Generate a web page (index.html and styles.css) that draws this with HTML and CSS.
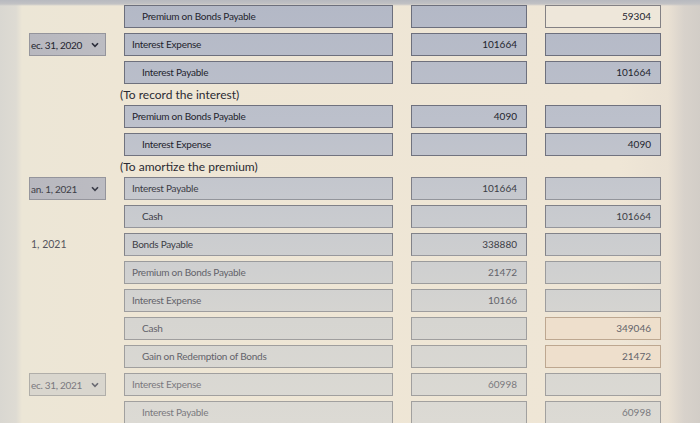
FILE: index.html
```html
<!DOCTYPE html>
<html lang="en">
<head>
<meta charset="utf-8">
<title>Journal entries</title>
<link rel="stylesheet" href="styles.css">
</head>
<body>
<div class="sheet">
  <div class="row tone-1">
    <div class="date-cell"></div>
    <div class="field acct indent">Premium on Bonds Payable</div>
    <div class="field num"></div>
    <div class="field num paper">59304</div>
  </div>
  <div class="row tone-1">
    <div class="select"><span class="select-text">ec. 31, 2020</span><svg class="chev" viewBox="0 0 8 6" width="8" height="6"><polyline points="1,1.2 4,4.4 7,1.2" fill="none" stroke="#2b2d3a" stroke-width="1.6"/></svg></div>
    <div class="field acct">Interest Expense</div>
    <div class="field num">101664</div>
    <div class="field num"></div>
  </div>
  <div class="row tone-1">
    <div class="date-cell"></div>
    <div class="field acct indent">Interest Payable</div>
    <div class="field num"></div>
    <div class="field num">101664</div>
  </div>
  <div class="note">(To record the interest)</div>
  <div class="row tone-1">
    <div class="date-cell"></div>
    <div class="field acct">Premium on Bonds Payable</div>
    <div class="field num">4090</div>
    <div class="field num"></div>
  </div>
  <div class="row tone-1">
    <div class="date-cell"></div>
    <div class="field acct indent">Interest Expense</div>
    <div class="field num"></div>
    <div class="field num">4090</div>
  </div>
  <div class="note">(To amortize the premium)</div>
  <div class="row tone-2">
    <div class="select"><span class="select-text">an. 1, 2021</span><svg class="chev" viewBox="0 0 8 6" width="8" height="6"><polyline points="1,1.2 4,4.4 7,1.2" fill="none" stroke="#3a3c48" stroke-width="1.6"/></svg></div>
    <div class="field acct">Interest Payable</div>
    <div class="field num">101664</div>
    <div class="field num"></div>
  </div>
  <div class="row tone-2">
    <div class="date-cell"></div>
    <div class="field acct indent">Cash</div>
    <div class="field num"></div>
    <div class="field num">101664</div>
  </div>
  <div class="row tone-2">
    <div class="date-cell plain">1, 2021</div>
    <div class="field acct">Bonds Payable</div>
    <div class="field num">338880</div>
    <div class="field num"></div>
  </div>
  <div class="row tone-3">
    <div class="date-cell"></div>
    <div class="field acct">Premium on Bonds Payable</div>
    <div class="field num">21472</div>
    <div class="field num"></div>
  </div>
  <div class="row tone-3">
    <div class="date-cell"></div>
    <div class="field acct">Interest Expense</div>
    <div class="field num">10166</div>
    <div class="field num"></div>
  </div>
  <div class="row tone-3">
    <div class="date-cell"></div>
    <div class="field acct indent">Cash</div>
    <div class="field num"></div>
    <div class="field num peach">349046</div>
  </div>
  <div class="row tone-3">
    <div class="date-cell"></div>
    <div class="field acct indent">Gain on Redemption of Bonds</div>
    <div class="field num"></div>
    <div class="field num peach">21472</div>
  </div>
  <div class="row tone-4">
    <div class="select light"><span class="select-text">ec. 31, 2021</span><svg class="chev" viewBox="0 0 8 6" width="8" height="6"><polyline points="1,1.2 4,4.4 7,1.2" fill="none" stroke="#6a6a72" stroke-width="1.6"/></svg></div>
    <div class="field acct">Interest Expense</div>
    <div class="field num">60998</div>
    <div class="field num"></div>
  </div>
  <div class="row tone-4">
    <div class="date-cell"></div>
    <div class="field acct indent">Interest Payable</div>
    <div class="field num"></div>
    <div class="field num">60998</div>
  </div>
</div>
</body>
</html>
```
FILE: styles.css
```css
html, body {
  margin: 0;
  padding: 0;
}
body {
  width: 700px;
  height: 423px;
  overflow: hidden;
  font-family: Lato, "Open Sans", sans-serif;
  background:
    linear-gradient(to bottom, #b7b9bf 0, #c2c2c4 4px, rgba(0,0,0,0) 6px),
    linear-gradient(to right, #d9d7d1 0, #dedbd3 16px, #ece6d6 22px, #eee6d5 120px, #efe6d6 620px, #eae1d3 668px, #d8d2cb 684px, #d2cdc7 700px);
}
.sheet {
  display: flex;
  flex-direction: column;
  gap: 5px;
  padding: 5px 0 0 29px;
}
.row {
  display: grid;
  grid-template-columns: 77px 269px 116px 116px;
  column-gap: 18px;
  height: 23px;
}
.field {
  box-sizing: border-box;
  height: 23px;
  border: 1px solid rgba(70, 70, 80, 0.55);
  border-bottom-color: rgba(70, 70, 80, 0.4);
  background: linear-gradient(to bottom, #b3b8c6 0, #bcc0cb 120px, #c9cbcf 220px, #d6d5d1 320px, #dcdad4 423px) fixed;
  font-size: 10px;
  line-height: 21px;
  letter-spacing: -0.25px;
  white-space: nowrap;
  overflow: hidden;
}
.acct {
  padding-left: 7px;
}
.acct.indent {
  padding-left: 17px;
}
.num {
  text-align: right;
  padding-right: 9px;
  letter-spacing: 0;
}
.paper {
  background: #eee7da;
  border-color: rgba(80, 80, 90, 0.5);
}
.peach {
  background: #eedfcc;
  border-color: rgba(150, 120, 95, 0.55);
}
.tone-1 { color: #23242e; }
.tone-2 { color: #3c3d46; }
.tone-3 { color: #63636a; }
.tone-4 { color: #7a797e; }
.tone-1 .field { border-color: rgba(60, 62, 75, 0.6); }
.tone-3 .field:not(.peach), .tone-4 .field { border-color: rgba(90, 90, 95, 0.45); }
.select {
  box-sizing: border-box;
  height: 23px;
  display: flex;
  align-items: center;
  justify-content: space-between;
  padding: 0 6px 0 1px;
  overflow: hidden;
  border: 1px solid rgba(80, 80, 90, 0.35);
  background: linear-gradient(to right, #b8b8bf, #bcbcc2);
  font-size: 10px;
  letter-spacing: -0.3px;
  white-space: nowrap;
}
.select.light {
  background: #d9d6ce;
  border-color: rgba(100, 100, 100, 0.35);
}
.chev {
  flex: none;
}
.date-cell.plain {
  font-size: 10.5px;
  line-height: 22px;
  padding-left: 2px;
  color: #55555c;
}
.note {
  height: 11px;
  line-height: 11px;
  padding-left: 91px;
  font-size: 12px;
  color: #2b2b33;
}
```
